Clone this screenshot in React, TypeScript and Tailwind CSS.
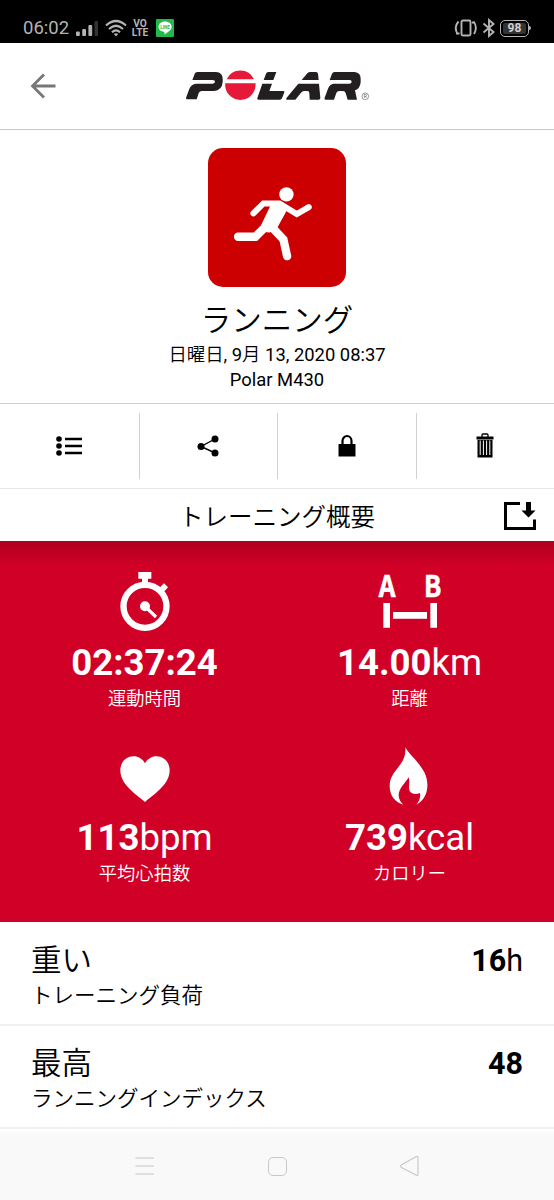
import type { ReactNode } from 'react';

interface Metric {
  value: string;
  unit?: string;
  label: string;
  icon: ReactNode;
}

interface SummaryRow {
  title: string;
  subtitle: string;
  value: string;
  unit?: string;
}

const RunnerIcon = () => (
  <svg viewBox="53 39 415 415" className="h-full w-full" fill="none" stroke="#fff" strokeLinecap="round" strokeLinejoin="round">
    <circle cx="288" cy="178" r="21.5" fill="#fff" stroke="none" />
    <path d="M189 235L219 205H267L319 237L355 216" strokeWidth="18" strokeLinejoin="miter" />
    <path d="M241 210L267 197L291 213L287 230L260 279L238 292L222 291L213 268Z" fill="#fff" stroke="none" />
    <path d="M143 305H195L230 270" strokeWidth="25" strokeLinejoin="miter" />
    <path d="M245 277L279 313L290 363" strokeWidth="25" strokeLinejoin="miter" />
  </svg>
);

const StopwatchIcon = () => (
  <svg viewBox="209 36 150 177" width="50" height="59" fill="#fff">
    <path d="M264 36h39v20h-10v14h-18V56h-11z" />
    <path d="M326 85l15-15 12 12-15 16z" />
    <circle cx="284" cy="139" r="64.5" fill="none" stroke="#fff" strokeWidth="19" />
    <circle cx="284" cy="139" r="15" />
    <path d="M284 139l33 32" stroke="#fff" strokeWidth="10" />
  </svg>
);

const DistanceIcon = () => (
  <svg viewBox="198 36 200 177" width="66.7" height="59" fill="#fff" className="overflow-visible">
    <g fontSize="88" fontWeight="700" stroke="#fff" strokeWidth="2" className="font-['Noto_Sans_CJK_JP',sans-serif] leading-none">
      <text x="206" y="110" textLength="50" lengthAdjust="spacingAndGlyphs">A</text>
      <text x="342" y="110" textLength="52" lengthAdjust="spacingAndGlyphs">B</text>
    </g>
    <path d="M220 129h20v74h-20zM361 129h20v74h-20zM249 156h102v20H249z" />
  </svg>
);

const HeartIcon = () => (
  <svg viewBox="209 22 150 177" width="50" height="59" fill="#fff">
    <path d="M284 71C291 58 304 50 318 50C342 50 358 69 358 92C358 131 320 158 284 187C248 158 210 131 210 92C210 69 226 50 250 50C264 50 277 58 284 71Z" />
  </svg>
);

const FlameIcon = () => (
  <svg viewBox="224 22 150 177" width="50" height="59" fill="#fff">
    <path d="M285 23C297 45 325 66 342 98C358 130 355 175 318 195C327 185 331 174 329 160C318 165 303 164 298 154C293 142 300 129 295 113C286 129 264 147 265 168C266 179 271 187 279 195C255 188 238 169 238 139C238 90 290 78 285 23Z" />
  </svg>
);

const PolarLogo = () => (
  <svg viewBox="45 30 560 95" className="ml-[2px] w-[186.7px]" fill="#231f20">
    <path d="M67 60L74 41Q76 36 82 36H138Q158 37 158 57V65Q156 91 132 93H94Q88 94 86 99L80 118H52Q47 118 48 113L58 86Q64 72 78 71H128Q135 70 135 65T128 60Z" />
    <path d="M170 58A45 45 0 0 1 252 58ZM165.500 70H256.500A45.500 45.500 0 0 1 165.500 78Z" fill="#e61938" />
    <path d="M281 60L288 41Q290 36 295 36H319L310 60ZM277 71H306L298 93H340Q344 93 343 97L336 115Q334 119 330 119H265Q261 119 262 114Z" />
    <path d="M395 60L412 40Q416 36 421 36H438Q443 36 444 41L446 60ZM385 71H447L451 114Q451 119 446 119H419L418 99Q418 93 412 93H402Q397 93 393 98L376 119H353Q346 119 350 113Z" />
    <path d="M479 60L486 41Q488 36 494 36H554Q572 38 572 56V67Q570 87 555 91L561 119H533L527 99Q525 93 519 93H508Q501 93 499 99L492 119H467Q462 119 464 113L474 86Q479 72 491 71H539Q545 70 545 65T539 60Z" />
    <circle cx="586" cy="109" r="10" fill="none" stroke="#555" strokeWidth="1.800" />
    <text x="586" y="114.500" fontSize="15" textAnchor="middle" fill="#555">R</text>
  </svg>
);

const metrics: Metric[] = [
  { value: '02:37:24', label: '運動時間', icon: <StopwatchIcon /> },
  { value: '14.00', unit: 'km', label: '距離', icon: <DistanceIcon /> },
  { value: '113', unit: 'bpm', label: '平均心拍数', icon: <HeartIcon /> },
  { value: '739', unit: 'kcal', label: 'カロリー', icon: <FlameIcon /> },
];

const rows: SummaryRow[] = [
  { title: '重い', subtitle: 'トレーニング負荷', value: '16', unit: 'h' },
  { title: '最高', subtitle: 'ランニングインデックス', value: '48' },
];

const actions: ReactNode[] = [
  <svg key="list" width="26" height="22" viewBox="0 0 26 22">
    <path d="M9 4h17M9 11h17M9 18h17" stroke="#000" strokeWidth="2.600" />
    <circle cx="3" cy="4" r="2.800" />
    <circle cx="3" cy="11" r="2.800" />
    <circle cx="3" cy="18" r="2.800" />
  </svg>,
  <svg key="share" width="22" height="22" viewBox="0 0 22 22">
    <path d="M18 4L4 11.500L18 18" fill="none" stroke="#000" strokeWidth="1.400" />
    <circle cx="18" cy="4" r="3.500" />
    <circle cx="4" cy="11.500" r="3.500" />
    <circle cx="18" cy="18" r="3.500" />
  </svg>,
  <svg key="lock" width="18" height="24" viewBox="0 0 18 24">
    <path d="M.5 10h17v12.500H.5z" />
    <path d="M4.500 11V7a4.500 5 0 0 1 9 0V11" fill="none" stroke="#000" strokeWidth="2.200" />
  </svg>,
  <svg key="trash" width="18" height="26" viewBox="0 0 18 26">
    <path d="M1.500 7h15v17.500h-15zM.5 3.500h17V6.500H.5z" />
    <path d="M6 4V2Q6 1 7 1h4q1 0 1 1V4" fill="none" stroke="#000" strokeWidth="1.300" />
    <path d="M4.200 7.500v14.500M7.400 7.500v14.500M10.600 7.500v14.500M13.800 7.500v14.500" stroke="#fff" strokeWidth="1" />
  </svg>,
];

function StatusBar() {
  return (
    <header className="flex h-[43px] items-start justify-between bg-black pr-[23px] pl-[23px] pt-[16px] text-[#b4b4b4]">
      <div className="flex h-6 items-center">
        <span className="w-[46px] text-[18.500px] leading-6">06:02</span>
        <svg className="ml-[7px]" width="22" height="17" viewBox="0 0 22 17" fill="currentColor">
          <rect x="0" y="11.500" width="3.800" height="4.500" rx="1" />
          <rect x="6.200" y="9" width="3.800" height="7" rx="1" />
          <rect x="12.400" y="5" width="3.800" height="11" rx="1" />
          <rect x="18.500" y="1" width="3.500" height="15" rx="1" fill="#333" />
        </svg>
        <svg className="ml-[7px]" width="22" height="18" viewBox="0 0 22 18" fill="none" stroke="currentColor" strokeWidth="2.200">
          <path d="M1 6.500Q11-2.500 21 6.500M4 10Q11 3.500 18 10M7 13.300Q11 9.500 15 13.300" />
          <path d="M8.800 15Q11 13.300 13.200 15L11 17.500Z" fill="currentColor" stroke="none" />
        </svg>
        <div className="ml-[4px] w-[18px] text-center text-[10.200px] leading-[9px] font-bold">
          <div>VO</div>
          <div>LTE</div>
        </div>
        <svg className="ml-[7px]" width="18" height="18" viewBox="0 0 18 18">
          <rect width="18" height="18" rx="1" fill="#1fba4b" />
          <path d="M9 2.500c-3.800 0-6.500 2.400-6.500 5.300 0 2.700 2.400 4.600 5.600 5.100.6.200.3 1.600.3 2.300 0 0 7.200-3.500 7.200-7.300C15.600 4.900 12.800 2.500 9 2.500z" fill="#fff" />
          <text x="9" y="9.800" fontSize="4.600" fontWeight="700" textAnchor="middle" fill="#1fba4b">LINE</text>
        </svg>
      </div>
      <div className="flex h-6 items-center">
        <svg width="24" height="18" viewBox="0 0 24 18" fill="none" stroke="currentColor" strokeWidth="1.900">
          <rect x="7.500" y="1.500" width="9" height="15" rx="1.500" />
          <path d="M4.500 2.500Q-.5 8 3.500 15M19.500 2.500Q24 8 20 15M2 14.500h3.500M18 3.500h3" />
        </svg>
        <svg className="ml-[4px]" width="14" height="20" viewBox="0 0 14 20" fill="none" stroke="currentColor" strokeWidth="1.900">
          <path d="M1.500 5.500L11.500 14L7 18V2L11.500 6L1.500 14.500" />
        </svg>
        <div className="ml-[4px] flex h-[17px] w-[29px] items-center justify-center rounded-[5px] border-[1.500px] border-current p-[2px]">
          <span className="flex h-full w-full items-center justify-center rounded-[2px] bg-[#333] text-[12px] font-bold text-[#d0d0d0]">98</span>
        </div>
        <span className="h-1 w-[2px] rounded-r bg-current" />
      </div>
    </header>
  );
}

function MetricCell({ metric }: { metric: Metric }) {
  return (
    <div className="flex h-[175px] flex-col items-center">
      {metric.icon}
      <p className="mt-[10px] text-[36.600px] leading-[44px] whitespace-nowrap">
        <span className="font-bold">{metric.value}</span>
        {metric.unit}
      </p>
      <p className="mt-[1px] text-[18.300px] leading-[26px] font-[350]">{metric.label}</p>
    </div>
  );
}

export default function App() {
  return (
    <div className="flex h-[1200px] w-[554px] flex-col overflow-hidden bg-white font-[Roboto,'Noto_Sans_CJK_JP',sans-serif] text-black">
      <StatusBar />

      {/* App bar */}
      <div className="grid h-[87px] grid-cols-[80px_1fr_80px] items-center border-b border-[#c8c8c8]">
        <svg className="ml-[30px]" width="26" height="26" viewBox="0 0 26 26" fill="none" stroke="#777" strokeWidth="2.800">
          <path d="M25.500 13H3M14 1.500L2.500 13L14 24.500" />
        </svg>
        <div className="flex justify-center">
          <PolarLogo />
        </div>
      </div>

      {/* Session */}
      <section className="flex h-[274px] flex-col items-center border-b border-[#cfcfcf] pt-[18px]">
        <div className="size-[138.500px] overflow-hidden rounded-[15px] bg-[#cc0000]">
          <RunnerIcon />
        </div>
        <h1 className="mt-[14px] text-[30.500px] leading-[40px] font-[350]">ランニング</h1>
        <p className="mt-[1px] text-[18.400px] leading-[25px]">
          <span className="font-[350]">日曜日</span>, 9<span className="font-[350]">月</span> 13, 2020 08:37
        </p>
        <p className="text-[18.400px] leading-[25px]">Polar M430</p>
      </section>

      {/* Actions */}
      <nav className="grid h-[85px] grid-cols-4 border-b border-[#e8e8e8] pt-[9px] pb-[9px]">
        {actions.map((action, index) => (
          <div
            key={index}
            className={`flex items-center justify-center ${index > 0 ? 'border-l border-[#d0d0d0]' : ''}`}
          >
            {action}
          </div>
        ))}
      </nav>

      <div className="grid h-[52px] grid-cols-[50px_1fr_50px] items-center">
        <h2 className="col-start-2 mt-[5px] text-center text-[24.500px] leading-[36px] font-[350]">トレーニング概要</h2>
        <svg className="mt-[2px]" width="32" height="28" viewBox="0 0 32 28">
          <path d="M16 1.500H1.500V26.500H30.500V17.500" fill="none" stroke="#000" strokeWidth="3" />
          <path d="M22 0h5v8.500h4.500L24.500 15.500L17.500 8.500h4.500z" />
        </svg>
      </div>

      {/* Training summary */}
      <section className="h-[381px] bg-[#d10027] text-white">
        <div className="h-[31px] bg-linear-to-b from-[#b00020] to-[#d10027] to-80%" />
        <div className="grid grid-cols-2 px-3">
          {metrics.map((metric) => (
            <MetricCell key={metric.label} metric={metric} />
          ))}
        </div>
      </section>

      <div className="pt-px">
        {rows.map((row) => (
          <div key={row.title} className="flex h-[103px] justify-between border-b-2 border-[#f0f0f0] px-[31px] pt-[16px]">
            <div>
              <p className="text-[30.500px] leading-[43px] font-[350]">{row.title}</p>
              <p className="text-[21.500px] leading-[28px] font-[350]">{row.subtitle}</p>
            </div>
            <p className="text-[30.500px] leading-[43px]">
              <span className="font-bold">{row.value}</span>
              {row.unit}
            </p>
          </div>
        ))}
      </div>

      {/* System navigation */}
      <footer className="mt-auto grid h-[68px] grid-cols-[1fr_auto_1fr] items-center bg-[#f9f9f9]">
        <svg className="ml-[135px]" width="20" height="20" viewBox="0 0 20 20" stroke="#c8c8c8" strokeWidth="1.200">
          <path d="M.5 2h18.500M.5 10h18.500M.5 18h18.500" />
        </svg>
        <span className="size-[19px] rounded-[5px] border border-[#c8c8c8]" />
        <svg className="ml-[112px]" width="20" height="22" viewBox="0 0 20 22" fill="none" stroke="#c8c8c8" strokeWidth="1.200" strokeLinejoin="round">
          <path d="M17.500 1.500Q19 1 19 2.500V19.500Q19 21 17.500 20.300L2.500 12.500Q.5 11 2.500 9.700Z" />
        </svg>
      </footer>
    </div>
  );
}
